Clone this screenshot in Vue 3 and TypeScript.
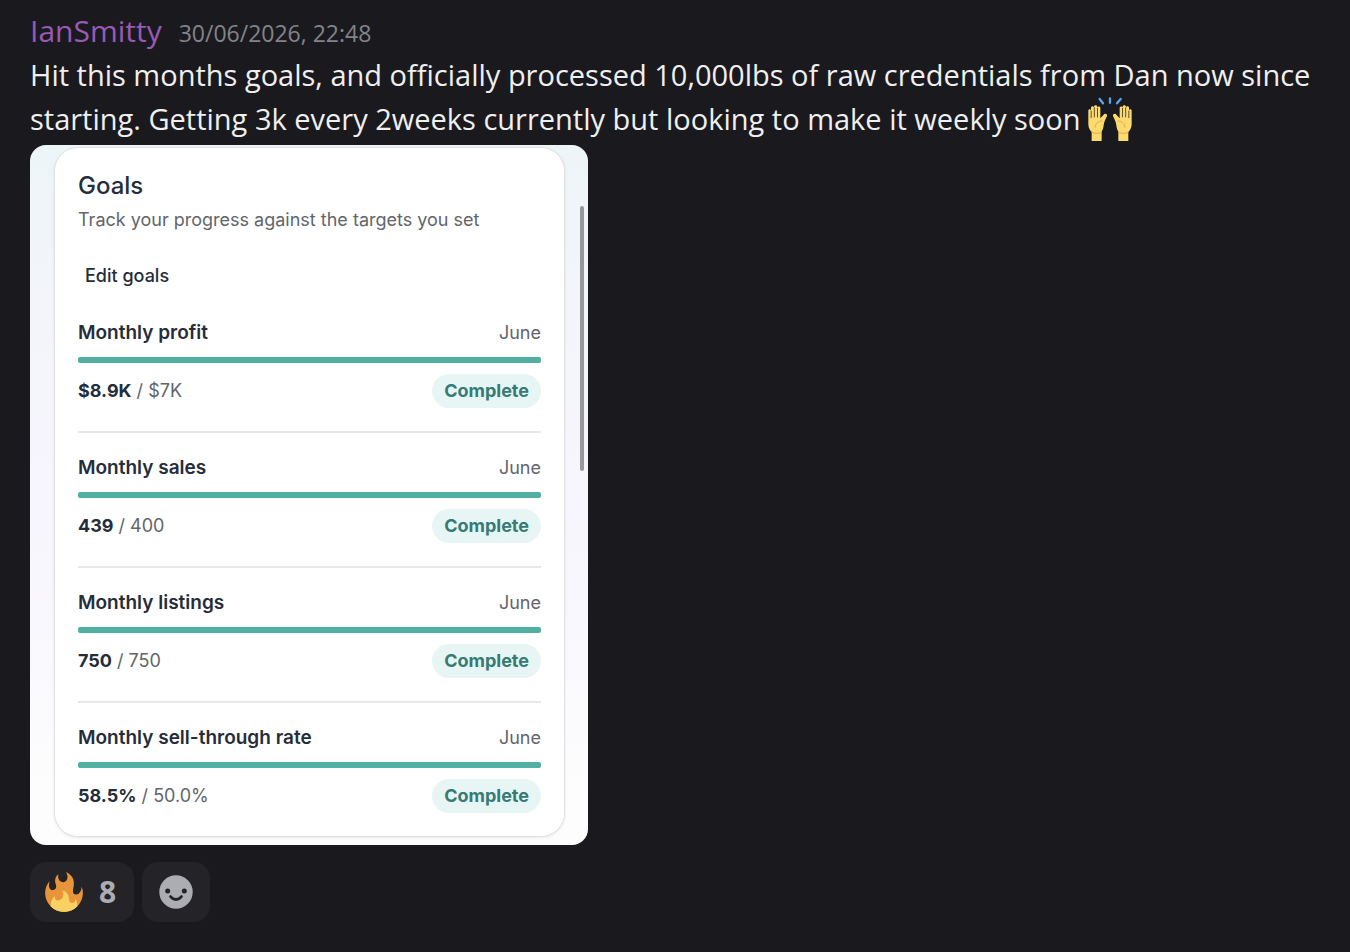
<script setup lang="ts">
interface Goal {
  id: string
  name: string
  period: string
  value: string
  target: string
  status: string
  percent: number
}

const goals: Goal[] = [
  { id: 'profit', name: 'Monthly profit', period: 'June', value: '$8.9K', target: '$7K', status: 'Complete', percent: 100 },
  { id: 'sales', name: 'Monthly sales', period: 'June', value: '439', target: '400', status: 'Complete', percent: 100 },
  { id: 'listings', name: 'Monthly listings', period: 'June', value: '750', target: '750', status: 'Complete', percent: 100 },
  { id: 'sell-through', name: 'Monthly sell-through rate', period: 'June', value: '58.5%', target: '50.0%', status: 'Complete', percent: 100 },
]
</script>

<template>
  <article class="message">
    <header class="meta">
      <span class="author">IanSmitty</span>
      <time class="time" datetime="2026-06-30T22:48">30/06/2026, 22:48</time>
    </header>
    <p class="text">
      Hit this months goals, and officially processed 10,000lbs of raw credentials from Dan now since<br />
      starting. Getting 3k every 2weeks currently but looking to make it weekly soon
      <svg class="hands" viewBox="48 21 132 132" role="img" aria-label="raising hands">
        <g stroke="#5ba4ea" stroke-width="7" stroke-linecap="round">
          <path d="M83 27l10 13M114 25v13M146 27l-11 13" />
        </g>
        <g id="hand">
          <path d="M59 153v-27c-7-7-10-14-10-24V62c0-6 8-6 8 0v-9c0-6 9-6 9 0v-3c0-6 10-6 10 0v4c0-6 9-6 9 0v31l9-10c4-7 13-4 11 3-5 10-9 18-10 28-1 9-3 14-6 19v28z" fill="#fbdb6e" />
          <path d="M57.500 62v22M67 52v30M76.500 54v28" stroke="#5c5038" stroke-width="3" fill="none" />
          <path d="M69 113c2-13 9-20 22-20M59 127c9 4 21 4 30 0" stroke="#e9a455" stroke-width="3" fill="none" />
        </g>
        <use href="#hand" transform="matrix(-1 0 0 1 228 0)" />
      </svg>
    </p>

    <section class="shot" aria-label="Goals">
      <div class="card">
        <h2 class="title">Goals</h2>
        <p class="subtitle">Track your progress against the targets you set</p>
        <button class="edit" type="button">Edit goals</button>
        <ul class="goals">
          <li v-for="goal in goals" :key="goal.id" class="goal">
            <div class="row head">
              <h3 class="name">{{ goal.name }}</h3>
              <span class="period">{{ goal.period }}</span>
            </div>
            <div class="track"><div class="fill" :style="{ width: goal.percent + '%' }"></div></div>
            <div class="row foot">
              <span class="amount"><strong>{{ goal.value }}</strong> / {{ goal.target }}</span>
              <span class="pill">{{ goal.status }}</span>
            </div>
          </li>
        </ul>
      </div>
      <div class="scrollbar"></div>
    </section>

    <footer class="reactions">
      <button class="reaction" type="button" aria-label="Fire, 8 reactions">
        <svg class="fire" viewBox="0 0 36 36" aria-hidden="true">
          <path fill="#e8943a" d="M35 19c0-2.062-.367-4.039-1.04-5.868-.46 5.389-3.333 8.157-6.335 6.868-2.812-1.208-.917-5.917-.777-8.164.236-3.809-.012-8.169-6.931-11.794 2.875 5.500.333 8.917-2.333 9.125-2.958.231-5.667-2.542-4.667-7.042-3.238 2.386-3.332 6.402-2.333 9 1.042 2.708-.042 4.958-2.583 5.208-2.840.280-4.418-3.041-2.963-8.333C2.520 10.965 1 14.805 1 19c0 9.389 7.611 17 17 17s17-7.611 17-17z" />
          <path fill="#f8d064" d="M28.394 23.999c.148 3.084-2.561 4.293-4.019 3.709-2.106-.843-1.541-2.291-2.083-5.291s-2.625-5.083-5.708-6c2.250 6.333-1.247 8.667-3.080 9.084-1.872.426-3.753-.001-3.968-4.007C7.352 23.668 6 26.676 6 30c0 .368.023.730.055 1.090C9.125 34.124 13.342 36 18 36s8.875-1.876 11.945-4.910c.032-.360.055-.722.055-1.090 0-2.187-.584-4.236-1.606-6.001z" />
        </svg>
        <span class="count">8</span>
      </button>
      <button class="reaction add" type="button" aria-label="Add reaction">
        <svg class="smile" viewBox="0 0 34 34" aria-hidden="true">
          <circle cx="17" cy="17" r="16.700" fill="#acadb2" />
          <circle cx="8.700" cy="16" r="2.500" fill="#242428" />
          <circle cx="25.300" cy="16" r="2.500" fill="#242428" />
          <path d="M11.500 21.500c3 4 8 4 11 0" fill="none" stroke="#242428" stroke-width="2.800" stroke-linecap="round" />
        </svg>
      </button>
    </footer>
  </article>
</template>

<style>
body {
  margin: 0;
  background: #1a1a1e;
}
</style>

<style scoped>
.message {
  padding: 9px 30px 30px;
  font-family: "Open Sans", "Noto Sans", sans-serif;
  color: #efeff0;
}
.meta {
  display: flex;
  align-items: baseline;
  gap: 17px;
  height: 44px;
  line-height: 44px;
  white-space: nowrap;
}
.author {
  color: #9b59b6;
  font-size: 30px;
  font-weight: 500;
}
.time {
  color: #82838b;
  font-size: 23px;
  font-weight: 500;
}
.text {
  margin: 0 -30px 4px 0;
  font-size: 29px;
  line-height: 44px;
}
.hands {
  width: 44px;
  height: 44px;
  vertical-align: bottom;
}
.shot {
  position: relative;
  box-sizing: border-box;
  max-width: 558px;
  padding: 2px 23px 8px 24px;
  overflow: hidden;
  border-radius: 16px;
  background: linear-gradient(180deg, #edf5f8 0, #f4f5fb 24%, #f7f5fd 48%, #f9f8fd 70%, #fdfdfd 92%);
  font-family: Inter, sans-serif;
  font-size: 18px;
  line-height: 24px;
  color: #62656b;
}
.card {
  padding: 22px 23px 23px;
  border: 1px solid #dfe1e4;
  border-radius: 24px;
  background: #fff;
  box-shadow: 0 1px 3px rgb(0 0 0 / 8%);
}
.title {
  margin: 0 0 6px;
  font-size: 24px;
  line-height: 32px;
  font-weight: 500;
  color: #252d3a;
}
.subtitle {
  margin: 0 0 32px;
}
.edit {
  display: block;
  margin: 0 0 33px;
  padding: 0 7px;
  border: 0;
  background: none;
  font: inherit;
  font-weight: 500;
  color: #252d3a;
}
.goals {
  margin: 0;
  padding: 0;
  list-style: none;
}
.goal + .goal {
  margin-top: 23px;
  padding-top: 23px;
  border-top: 2px solid #e6e7e8;
}
.row {
  display: flex;
  align-items: center;
  justify-content: space-between;
}
.name {
  margin: 0;
  font-size: 19px;
  font-weight: 600;
  color: #252d3a;
}
.track {
  height: 6px;
  margin: 12px 0 11px;
  overflow: hidden;
  border-radius: 2px;
  background: #e7f5f4;
}
.fill {
  height: 100%;
  background: #51b0a2;
}
.amount strong {
  font-weight: 700;
  color: #252d3a;
}
.pill {
  padding: 5px 12px;
  border-radius: 17px;
  background: #e7f5f4;
  font-weight: 700;
  color: #367b74;
}
.scrollbar {
  position: absolute;
  top: 61px;
  right: 4px;
  width: 4px;
  height: 265px;
  border-radius: 2px;
  background: #96989c;
}
.reactions {
  display: flex;
  gap: 8px;
  margin-top: 17px;
}
.reaction {
  display: flex;
  align-items: center;
  gap: 15px;
  height: 60px;
  padding: 0 18px 0 14px;
  border: 0;
  border-radius: 16px;
  background: #242428;
  color: #acadb2;
  font-family: inherit;
}
.add {
  padding: 0 17px;
}
.fire {
  width: 40px;
  height: 40px;
}
.smile {
  width: 34px;
  height: 34px;
}
.count {
  font-size: 30px;
  line-height: 40px;
  font-weight: 700;
}
</style>
